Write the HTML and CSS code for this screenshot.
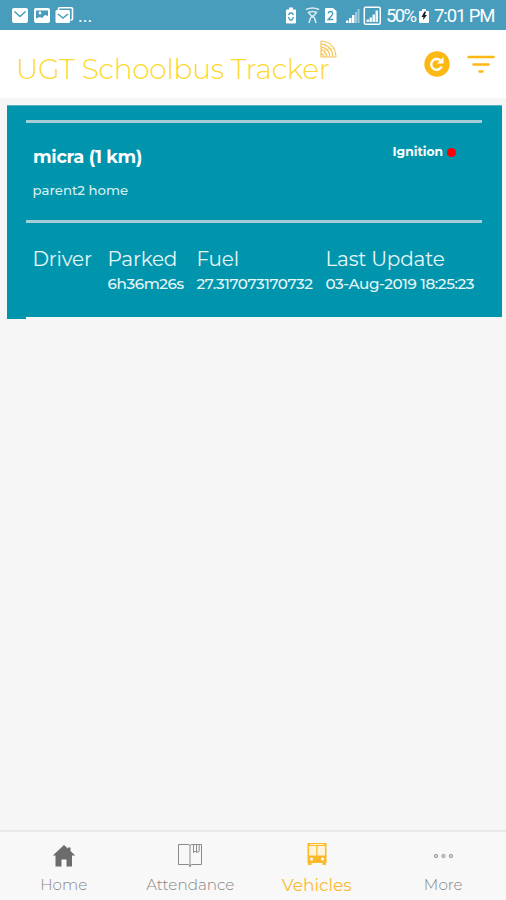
FILE: index.html
```html
<!DOCTYPE html>
<html lang="en">
<head>
<meta charset="utf-8">
<title>UGT Schoolbus Tracker</title>
<link rel="stylesheet" href="styles.css">
</head>
<body>
<div class="app">
  <div class="status">
    <svg class="status-left" width="62" height="18" viewBox="0 0 62 18">
      <rect x="0" y="1" width="16" height="15" rx="2" fill="#fff"/>
      <path d="M2.500 4.500l5.500 5 5.500-5" fill="none" stroke="#489dbd" stroke-width="1.600"/>
      <rect x="22" y="1" width="16" height="15" rx="2" fill="#fff"/>
      <path d="M24 11.500V3.500h12v5.500l-3-1-3 3-2-1z" fill="#489dbd"/><circle cx="28" cy="6" r="1.400" fill="#fff"/>
      <path d="M46.500 4V1.500Q46.500.8 47.500.8h12q1 0 1 1V12q0 1-1 1h-1" fill="none" stroke="#fff" stroke-width="1.600"/>
      <rect x="43.500" y="3" width="14.500" height="13" rx="1.500" fill="#fff"/>
      <path d="M46 7l5 4 5-4" fill="none" stroke="#489dbd" stroke-width="1.500"/>
    </svg>
    <span class="dots">...</span>
    <svg class="status-icons" width="97" height="20" viewBox="0 0 97 20">
      <path d="M2 4.500q0-1 1-1h2V1.500h4v2h2q1 0 1 1v12q0 1-1 1H3q-1 0-1-1z" fill="#fff"/>
      <path d="M4.500 9L6 7h2l1.500 2M9.500 11L8 14H6l-1.700-3" fill="none" stroke="#489dbd" stroke-width="1.300"/>
      <path d="M22 3.500q6.500-3 13 0M24.500 6.500q4-2 8 0M24 6l4.500 5L33 6M26.500 12l2-2 2 2M25 17l1.500-5M32 17l-1.500-5" fill="none" stroke="#fff" stroke-width="1.500" opacity=".8"/>
      <path d="M42 2h7l3.500 3v11q0 1-1 1H42q-1 0-1-1V3q0-1 1-1z" fill="#fff"/>
      <path d="M44.300 7.500q0-2 2.200-2t2.200 2q0 1.400-4.500 6h5" fill="none" stroke="#489dbd" stroke-width="1.400"/>
      <path d="M62 14.500h2.500V17H62zM65 12h2.500v5H65zM68 9h2.500v8H68z" fill="#fff"/>
      <path d="M71 6h2v11h-2zM73.500 3h2v14h-2z" fill="#fff" opacity=".45"/>
      <rect x="80.300" y="1.200" width="16" height="17" rx="1.500" fill="none" stroke="#fff" stroke-width="1.500"/>
      <path d="M82.500 13.500H85V16h-2.500zM85.500 11.500H88V16h-2.500zM88.500 8.500H91V16h-2.500zM91.500 4.500H94V16h-2.500z" fill="#fff" opacity=".9"/>
    </svg>
    <span class="percent">50%</span>
    <svg class="battery" width="10" height="17" viewBox="0 0 10 17">
      <path d="M0 4q0-1 1-1h2V1h4v2h2q1 0 1 1v10q0 1-1 1H1q-1 0-1-1z" fill="#fff"/>
      <path d="M5.500 3.500L2.500 9h2L4 12l4-5H6l1-3.500z" fill="#15232a"/>
    </svg>
    <span class="clock">7:01 PM</span>
  </div>
  <header class="header">
    <h1 class="title">UGT Schoolbus Tracker
      <svg class="signal" width="17" height="18" viewBox="0 0 17 18" fill="none" stroke="#f6c65a" stroke-width="1.200">
        <path d="M1 1q14 1 15 16M1 4q11 1 12 13M1 7q8 1 9 10M1 10q5 1 6 7M1 13q2 1 3 4M1 1v16h15"/>
        <path d="M1 16L12 5M5 3v14M1 9h13" stroke-width=".5"/>
      </svg>
    </h1>
    <svg class="refresh" width="26" height="26" viewBox="0 0 26 26">
      <circle cx="13" cy="13" r="12.700" fill="#fdb913"/>
      <path d="M17.600 15.500a5.400 5.400 0 1 1-1.200-6" fill="none" stroke="#fff" stroke-width="2.400"/>
      <path d="M19.500 6v6.500H13z" fill="#fff"/>
    </svg>
    <svg class="filter" width="28" height="20" viewBox="0 0 28 20" stroke="#fdb913" stroke-width="2.500" stroke-linecap="round">
      <path d="M1.500 3h25M6.500 10.500h15M12.500 17.500h3"/>
    </svg>
  </header>
  <main class="content">
    <section class="card">
      <div class="vehicle">
        <div class="vehicle-top">
          <b class="name">micra (1 km)</b>
          <span class="ignition"><b class="ign-label">Ignition</b><i class="led"></i></span>
        </div>
        <div class="place">parent2 home</div>
      </div>
      <div class="stats">
        <div class="stat driver"><span class="head">Driver</span></div>
        <div class="stat parked"><span class="head">Parked</span><span class="value">6h36m26s</span></div>
        <div class="stat fuel"><span class="head">Fuel</span><span class="value">27.317073170732</span></div>
        <div class="stat"><span class="head">Last Update</span><span class="value">03-Aug-2019 18:25:23</span></div>
      </div>
      <div class="foot"></div>
    </section>
  </main>
  <nav class="tabs">
    <a class="tab">
      <svg width="24" height="26" viewBox="0 0 24 26"><path d="M12 3L.8 13.500H3.500V24.500H9.500V17.500h5v7h5.500V13.500h3.200L18.500 9V5.500H16v1.300z" fill="#6c6c6c"/></svg>
      <span>Home</span>
    </a>
    <a class="tab">
      <svg width="26" height="26" viewBox="0 0 26 26" fill="none" stroke="#8b8b8b"><path d="M13 3.500q-1-1-2-1H1.500V22.500H11q2 0 2 2 0-2 2-2h9.500V2.500H15q-1 0-2 1zM13 3.500V25M16.500 2.500v8l1.500-1.300 1.500 1.300v-8M19.500 9L21 10.500 22.200 9v-6"/></svg>
      <span>Attendance</span>
    </a>
    <a class="tab active">
      <svg width="22" height="26" viewBox="0 0 22 26"><path d="M1.500 1h19v20h-19z" fill="#fdb929"/><path d="M3 4h7.300v9.500H3zM11.500 4H19v9.500h-7.500z" fill="#fff4d8"/><path d="M4 2.500h14" stroke="#fff0c8"/><circle cx="5.500" cy="17" r="1.500" fill="#fff"/><circle cx="16.500" cy="17" r="1.500" fill="#fff"/><path d="M2 22h3.500M16.500 22H20" stroke="#fdb929" stroke-width="2"/></svg>
      <span>Vehicles</span>
    </a>
    <a class="tab">
      <svg width="22" height="26" viewBox="0 0 22 26" fill="#d0d0d0" stroke="#a0a0a0"><circle cx="4" cy="14" r="1.700"/><circle cx="11.500" cy="14" r="1.700"/><circle cx="19" cy="14" r="1.700"/></svg>
      <span>More</span>
    </a>
  </nav>
</div>
</body>
</html>
```
FILE: styles.css
```css
* { box-sizing: border-box; }
body { margin: 0; font-family: Montserrat, Inter, sans-serif; }
.app { width: 506px; height: 900px; display: flex; flex-direction: column; background: #f6f6f6; overflow: hidden; }
svg { display: block; flex: none; }

.status { height: 30px; flex: none; display: flex; align-items: center; background: #489dbd; color: #fff; font-family: Roboto, sans-serif; font-size: 18px; line-height: 30px; padding: 2px 0 0 12px; white-space: nowrap; }
.dots { margin-left: 4px; width: 206px; }
.status-icons { margin-right: 5px; }
.percent { width: 33px; font-size: 18.5px; letter-spacing: -1.6px; }
.clock { margin-left: 5px; font-size: 18.5px; letter-spacing: -1.1px; }

.header { height: 68px; flex: none; display: flex; align-items: center; background: #fff; padding: 0 11px 0 16px; }
.title { position: relative; margin: 10px auto 0 0; font-size: 28px; line-height: 34px; font-weight: 300; color: #fdd82e; letter-spacing: -.25px; white-space: nowrap; }
.signal { position: absolute; left: 304px; top: -12px; }
.refresh { margin-right: 17px; }

.content { flex: 1; padding: 7px 4px 0 7px; }
.card { height: 214px; background: #0095ac; color: #fff; padding: 14px 20px 0 19px; border-top: 1px solid #55b0bf; display: flex; flex-direction: column; }
.vehicle { height: 103px; border-top: 3px solid #a5cdd6; border-bottom: 3px solid #a5cdd6; padding: 21px 26px 0 7px; }
.vehicle-top { display: flex; justify-content: space-between; height: 26px; line-height: 26px; white-space: nowrap; }
.name { font-size: 17.8px; letter-spacing: -.3px; }
.ignition { display: flex; align-items: center; height: 16px; }
.ign-label { font-size: 12.3px; }
.led { width: 9px; height: 9px; border-radius: 50%; background: #fb0007; margin-left: 4px; }
.place { font-size: 13.3px; font-weight: 500; line-height: 20px; margin-top: 10px; margin-left: -.5px; color: #d5eff2; }

.stats { display: flex; padding: 24px 0 0 6.5px; height: 93px; color: #e8f6f8; white-space: nowrap; }
.stat { display: flex; flex-direction: column; align-items: flex-start; flex: none; }
.driver { width: 75px; }
.parked { width: 89px; }
.fuel { width: 129px; }
.head { font-size: 20px; line-height: 24px; letter-spacing: -.2px; }
.value { font-size: 15.2px; line-height: 22px; margin-top: 2px; font-weight: 500; letter-spacing: -.4px; }
.foot { height: 2px; background: #f6f6f6; margin-right: -20px; margin-top: auto; }

.tabs { height: 70px; flex: none; display: grid; grid-template-columns: repeat(4, 1fr); background: #f8f8f8; border-top: 2px solid #e9e9e9; color: #858585; font-size: 15.2px; }
.tab { display: flex; flex-direction: column; align-items: center; padding-top: 10px; line-height: 20px; font-weight: 300; margin-right: -1px; }
.tab svg { margin-bottom: 7px; }
.active { color: #fbb833; font-size: 17px; font-weight: 400; }
```
